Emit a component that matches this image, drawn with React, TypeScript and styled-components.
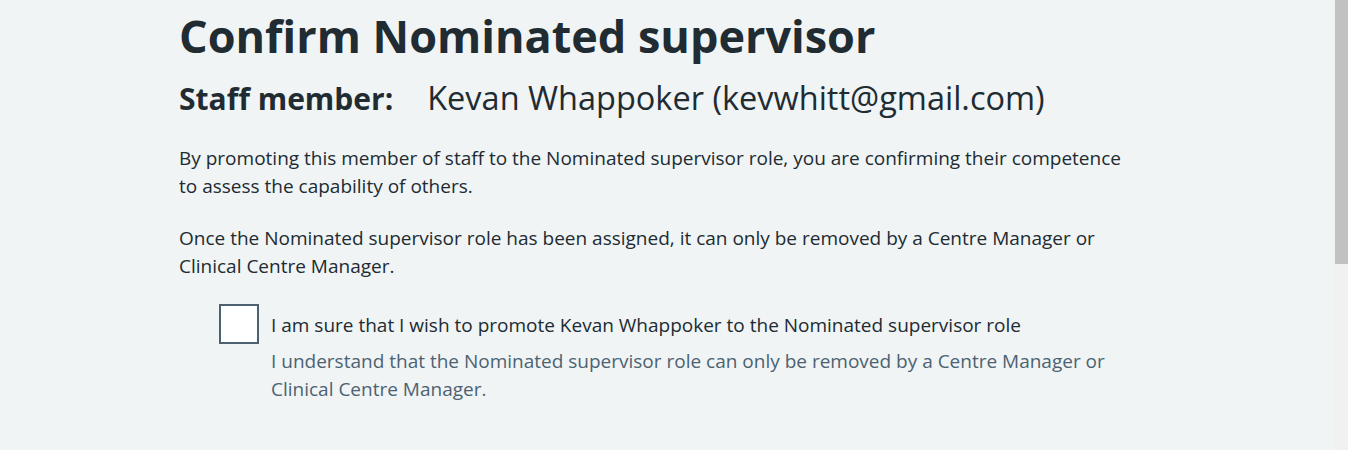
import styled, { createGlobalStyle } from 'styled-components';

const GlobalStyle = createGlobalStyle`
    html, body {
        margin: 0;
        padding: 0;
        background: #f0f4f5;
    }
    body {
        font-family: "Open Sans", "Liberation Sans", Arial, sans-serif;
        color: #212b32;
        overflow: hidden;
    }
`;

const App = () => {
    return (
        <>
            <GlobalStyle />
            <Page>
                <Container>
                    <Title>Confirm Nominated supervisor</Title>
                    <StaffRow>
                        <StaffLabel>Staff member:</StaffLabel>
                        <StaffValue>Kevan Whappoker (kevwhitt@gmail.com)</StaffValue>
                    </StaffRow>
                    <Body>
                        By promoting this member of staff to the Nominated supervisor role, you are
                        confirming their competence to assess the capability of others.
                    </Body>
                    <Body>
                        Once the Nominated supervisor role has been assigned, it can only be removed
                        by a Centre Manager or Clinical Centre Manager.
                    </Body>
                    <CheckboxItem>
                        <CheckboxInput type="checkbox" id="confirm" />
                        <CheckboxText>
                            <CheckboxLabel htmlFor="confirm">
                                I am sure that I wish to promote Kevan Whappoker to the Nominated
                                supervisor role
                            </CheckboxLabel>
                            <Hint>
                                I understand that the Nominated supervisor role can only be removed by a
                                Centre Manager or Clinical Centre Manager.
                            </Hint>
                        </CheckboxText>
                    </CheckboxItem>
                </Container>
            </Page>
            <Scrollbar>
                <ScrollThumb />
            </Scrollbar>
        </>
    );
};

const Page = styled.main`
    min-height: 450px;
    padding-right: 15px;
    padding-top: 10px;
`;

const Container = styled.div`
    width: 960px;
    margin: 0 0 0 179px;
`;

const Title = styled.h1`
    font-size: 45px;
    line-height: 52px;
    font-weight: 700;
    margin: 0 0 16px;
`;

const StaffRow = styled.div`
    display: flex;
    align-items: baseline;
    gap: 34px;
    height: 40px;
    line-height: 40px;
    margin-bottom: 26px;
`;

const StaffLabel = styled.span`
    font-size: 30px;
    font-weight: 700;
`;

const StaffValue = styled.span`
    font-size: 32.5px;
    font-weight: 400;
`;

const Body = styled.p`
    font-size: 19px;
    line-height: 28px;
    margin: 0 0 24px;
`;

const CheckboxItem = styled.div`
    display: flex;
    align-items: flex-start;
    gap: 12px;
    margin-left: 40px;
`;

const CheckboxInput = styled.input`
    appearance: none;
    flex: none;
    width: 40px;
    height: 40px;
    margin: 0;
    background: #ffffff;
    border: 2px solid #4c6272;
    box-sizing: border-box;
`;

const CheckboxText = styled.div`
    padding-top: 7px;
`;

const CheckboxLabel = styled.label`
    display: block;
    font-size: 19px;
    line-height: 28px;
    margin-bottom: 8px;
`;

const Hint = styled.div`
    font-size: 19px;
    line-height: 28px;
    color: #4c6272;
`;

const Scrollbar = styled.div`
    position: fixed;
    top: 0;
    right: 0;
    bottom: 0;
    width: 15px;
    background: #f1f1f1;
`;

const ScrollThumb = styled.div`
    margin-left: 2px;
    height: 264px;
    background: #c1c1c1;
`;

export default App;
